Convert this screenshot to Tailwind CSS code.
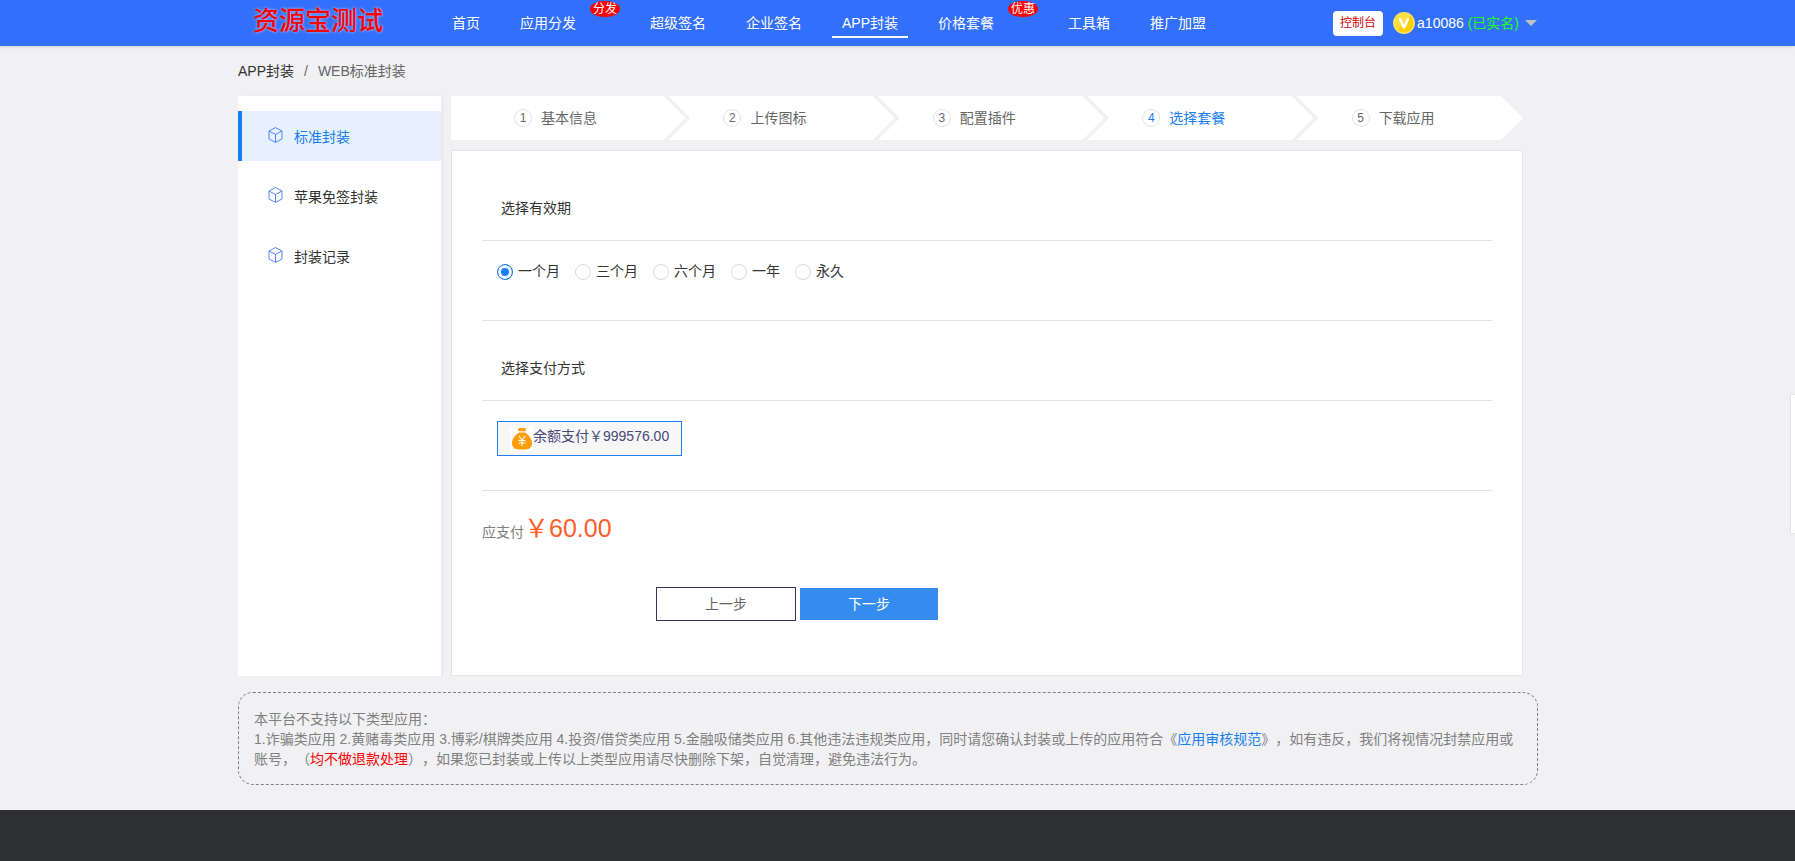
<!DOCTYPE html>
<html lang="zh-CN">
<head>
    <meta charset="UTF-8">
    <meta name="viewport" content="width=device-width, initial-scale=1.0">
    <title>WEB标准封装</title>
    <!-- Tailwind CSS CDN -->
    <script src="https://cdn.jsdelivr.net/npm/@tailwindcss/browser@4"></script>
</head>
<body class="flex flex-col min-h-screen bg-[#f1f1f4] text-[14px] leading-5 text-[#333] font-['Liberation_Sans','Noto_Sans_CJK_SC',sans-serif] [text-spacing-trim:space-all]">

    <!-- Header -->
    <header class="bg-[#326ffb] text-white pr-[19px] shadow-sm shadow-black/10">
        <div class="max-w-[1300px] mx-auto h-[46px] flex items-center pl-[15px]">
            <a href="#" class="w-[189px] text-[26px] leading-10 pb-1 font-medium text-[#f00] [text-shadow:0_0_3px_#ffffffb0]">资源宝测试</a>
            <nav class="flex flex-1 gap-5 h-full">
                <a href="#" class="px-2.5 pt-[13px]">首页</a>
                <div class="flex items-start">
                    <a href="#" class="px-2.5 pt-[13px]">应用分发</a>
                    <span class="ml-1 mt-px w-[30px] h-4 rounded-[50%] bg-[#f00] text-[12px] leading-4 text-center">分发</span>
                </div>
                <a href="#" class="px-2.5 pt-[13px]">超级签名</a>
                <a href="#" class="px-2.5 pt-[13px]">企业签名</a>
                <a href="#" class="px-2.5 pt-[13px] h-[38px] border-b-2 border-white">APP封装</a>
                <div class="flex items-start">
                    <a href="#" class="px-2.5 pt-[13px]">价格套餐</a>
                    <span class="ml-1 mt-px w-[30px] h-4 rounded-[50%] bg-[#f00] text-[12px] leading-4 text-center">优惠</span>
                </div>
                <a href="#" class="px-2.5 pt-[13px]">工具箱</a>
                <a href="#" class="px-2.5 pt-[13px]">推广加盟</a>
            </nav>
            <a href="#" class="w-[50px] h-[25px] mr-2.5 rounded bg-white text-[#c00] text-[12px] leading-[25px] text-center">控制台</a>
            <button type="button" class="flex items-center pr-px">
                <svg class="w-[22px] h-[22px] mr-0.5" viewBox="0 0 22 22">
                    <circle cx="11" cy="11" r="11" fill="#fbe36b" />
                    <circle cx="11" cy="11" r="9.5" fill="#fdd000" />
                    <path d="M1.5 11a9.5 9.5 0 0 1 16-7L4.500 17.900A9.500 9.500 0 0 1 1.500 11Z" fill="#ffdf40" />
                    <path d="M7 7l4 8.500L15 7" fill="none" stroke="#fff" stroke-width="2.600" stroke-linecap="round" stroke-linejoin="round" />
                </svg>
                <span>a10086 <span class="text-[#2f2]">(已实名)</span></span>
                <svg class="w-3 h-1.5 ml-1.5" viewBox="0 0 12 6"><path d="M0 0h12L6 6z" fill="#c2c2c2" /></svg>
            </button>
        </div>
    </header>

    <main class="flex-1 pr-[19px]">
        <div class="max-w-[1300px] mx-auto">
            <!-- Breadcrumb -->
            <nav class="flex gap-2.5 pt-[15px] pb-[15px]">
                <a href="#">APP封装</a>
                <span class="text-[#666]">/</span>
                <span class="text-[#666]">WEB标准封装</span>
            </nav>

            <div class="flex gap-2.5 pr-[15px]">
                <!-- Sidebar -->
                <aside class="w-[203px] bg-white pt-[15px] shadow-[2px_0_3px_rgba(0,0,0,0.03)]">
                    <ul class="flex flex-col gap-2.5">
                        <li>
                            <a href="#" class="flex items-center h-[50px] pl-[26px] pt-0.5 gap-[11px] border-l-4 border-[#177ef5] bg-[#e7f1fe] text-[#177ef5]">
                                <svg class="w-[15px] h-4 mb-1" viewBox="0 0 15 16" fill="none" stroke="#5585f5"><path d="M7.500.6 14 4v8l-6.500 3.400L1 12V4zM1 4l6.500 3.500L14 4M7.500 7.500v8" /></svg>
                                标准封装
                            </a>
                        </li>
                        <li>
                            <a href="#" class="flex items-center h-[50px] pl-[30px] pt-0.5 gap-[11px]">
                                <svg class="w-[15px] h-4 mb-1" viewBox="0 0 15 16" fill="none" stroke="#5585f5"><path d="M7.500.6 14 4v8l-6.500 3.400L1 12V4zM1 4l6.500 3.500L14 4M7.500 7.500v8" /></svg>
                                苹果免签封装
                            </a>
                        </li>
                        <li>
                            <a href="#" class="flex items-center h-[50px] pl-[30px] pt-0.5 gap-[11px]">
                                <svg class="w-[15px] h-4 mb-1" viewBox="0 0 15 16" fill="none" stroke="#5585f5"><path d="M7.500.6 14 4v8l-6.500 3.400L1 12V4zM1 4l6.500 3.500L14 4M7.500 7.500v8" /></svg>
                                封装记录
                            </a>
                        </li>
                    </ul>
                </aside>

                <section class="flex-1">
                    <!-- Steps -->
                    <ol class="flex h-11 text-[#666]">
                        <li class="grow basis-1.5 flex items-center gap-[9px] pl-[63px] bg-white [clip-path:polygon(0_0,calc(100%-22px)_0,100%_50%,calc(100%-22px)_100%,0_100%)]">
                            <span class="size-[18px] rounded-full border border-[#e2e2e2] text-[12px] leading-4 text-center">1</span>基本信息
                        </li>
                        <li class="grow basis-0 -ml-[17px] flex items-center gap-[9px] pl-[55px] bg-white [clip-path:polygon(0_0,calc(100%-22px)_0,100%_50%,calc(100%-22px)_100%,0_100%,22px_50%)]">
                            <span class="size-[18px] rounded-full border border-[#e2e2e2] text-[12px] leading-4 text-center">2</span>上传图标
                        </li>
                        <li class="grow basis-0 -ml-[17px] flex items-center gap-[9px] pl-[55px] bg-white [clip-path:polygon(0_0,calc(100%-22px)_0,100%_50%,calc(100%-22px)_100%,0_100%,22px_50%)]">
                            <span class="size-[18px] rounded-full border border-[#e2e2e2] text-[12px] leading-4 text-center">3</span>配置插件
                        </li>
                        <li class="grow basis-0 -ml-[17px] flex items-center gap-[9px] pl-[55px] bg-white text-[#177ef5] [clip-path:polygon(0_0,calc(100%-22px)_0,100%_50%,calc(100%-22px)_100%,0_100%,22px_50%)]">
                            <span class="size-[18px] rounded-full border border-[#e2e2e2] text-[12px] leading-4 text-center">4</span>选择套餐
                        </li>
                        <li class="grow basis-0 -ml-[17px] flex items-center gap-[9px] pl-[55px] bg-white [clip-path:polygon(0_0,calc(100%-22px)_0,100%_50%,calc(100%-22px)_100%,0_100%,22px_50%)]">
                            <span class="size-[18px] rounded-full border border-[#e2e2e2] text-[12px] leading-4 text-center">5</span>下载应用
                        </li>
                    </ol>

                    <!-- Package form -->
                    <form class="mt-2.5 bg-white border border-[#e4e5e7] px-[30px] pt-[30px] pb-[54px]">
                        <h2 class="h-[60px] pl-[19px] pt-[17px] border-b border-[#e2e2e2]">选择有效期</h2>
                        <div class="flex gap-[15px] pl-[15px] pt-5 h-20 border-b border-[#e2e2e2]">
                            <label class="flex h-5 items-center gap-[5px]"><input type="radio" name="period" checked class="appearance-none size-4 mt-0.5 rounded-full border border-[#177ef5] bg-[#177ef5] [box-shadow:inset_0_0_0_3px_#fff]">一个月</label>
                            <label class="flex h-5 items-center gap-[5px]"><input type="radio" name="period" class="appearance-none size-4 mt-0.5 rounded-full border border-[#dcdcdc]">三个月</label>
                            <label class="flex h-5 items-center gap-[5px]"><input type="radio" name="period" class="appearance-none size-4 mt-0.5 rounded-full border border-[#dcdcdc]">六个月</label>
                            <label class="flex h-5 items-center gap-[5px]"><input type="radio" name="period" class="appearance-none size-4 mt-0.5 rounded-full border border-[#dcdcdc]">一年</label>
                            <label class="flex h-5 items-center gap-[5px]"><input type="radio" name="period" class="appearance-none size-4 mt-0.5 rounded-full border border-[#dcdcdc]">永久</label>
                        </div>
                        <h2 class="h-20 pl-[19px] pt-[37px] border-b border-[#e2e2e2]">选择支付方式</h2>
                        <div class="pl-[15px] pt-5 h-[90px] border-b border-[#e2e2e2]">
                            <button type="button" class="flex h-[35px] pl-3 pr-3 pt-1 border border-[#1e80f0] bg-[#f7f7f7] text-[#4a4a7a]">
                                <svg class="w-[23px] h-[25px]" viewBox="0 0 23 25">
                                    <path d="M0 0h23v25H0z" fill="#fff" />
                                    <rect x="8" y="2" width="8" height="3.200" rx="1.500" fill="#ff9d0a" />
                                    <path d="M9 6.500h6c4 2.500 7 6.500 7 10.500 0 4.500-3 6.500-7 6.500H9c-4 0-7-2-7-6.500C2 13 5 9 9 6.500Z" fill="#ff9d0a" />
                                    <path d="M9 10l3 4 3-4M8.500 14.500h7M8.500 17h7M12 14v6" fill="none" stroke="#fff" stroke-width="1.100" />
                                </svg>
                                <span>余额支付￥999576.00</span>
                            </button>
                        </div>
                        <p class="pt-[19px] text-[#808080]">应支付<span class="text-[25px] leading-9 text-[#ff5e2c]">￥60.00</span></p>
                        <div class="flex items-center gap-1 pl-[174px] pt-[41px]">
                            <button type="button" class="w-[140px] h-[34px] border border-[#35335f] text-[#666]">上一步</button>
                            <button type="submit" class="w-[138px] h-8 bg-[#368cee] text-white">下一步</button>
                        </div>
                    </form>
                </section>
            </div>

            <!-- Notice -->
            <div class="mt-4 mb-6 px-[15px] pt-4 pb-[15px] border border-dashed border-[#808080] rounded-[15px] text-[#808080]">
                <p>本平台不支持以下类型应用：</p>
                <p>1.诈骗类应用 2.黄赌毒类应用 3.博彩/棋牌类应用 4.投资/借贷类应用 5.金融吸储类应用 6.其他违法违规类应用，同时请您确认封装或上传的应用符合《<a href="#" class="text-[#177ef5]">应用审核规范</a>》，如有违反，我们将视情况封禁应用或账号，（<span class="text-[#f00]">均不做退款处理</span>），如果您已封装或上传以上类型应用请尽快删除下架，自觉清理，避免违法行为。</p>
            </div>
        </div>
    </main>

    <!-- Footer -->
    <footer class="bg-[#2f3033] h-[51px]"></footer>

    <!-- Collapsed service panel on the window edge -->
    <aside class="fixed right-0 top-[394px] w-[5px] h-[140px] bg-white border border-r-0 border-[#e4e4e6]"></aside>
</body>
</html>
